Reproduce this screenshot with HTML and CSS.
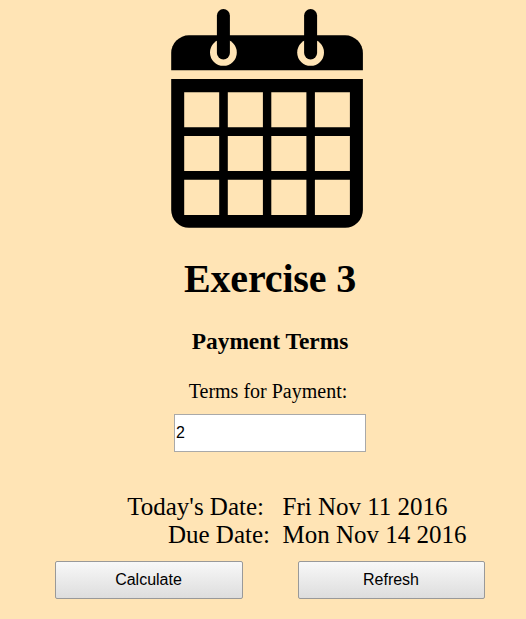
FILE: index.html
```html
<!DOCTYPE html>
<html lang="en">
<head>
<meta charset="utf-8">
<title>Exercise 3</title>
<link rel="stylesheet" href="styles.css">
</head>
<body>
<main class="page">
  <svg class="calendar" width="194" height="220" viewBox="170 9 194 220" aria-hidden="true">
    <path d="M171.2 70.2V53a17.7 17.7 0 0 1 17.7-17.7H345.2A17.7 17.7 0 0 1 362.9 53V70.2Z"/>
    <path fill-rule="evenodd" d="M171.2 79.1H362.9V210a17.7 17.7 0 0 1-17.7 17.8H188.9A17.7 17.7 0 0 1 171.2 210ZM184.2 92.2v35.1h35v-35.1zm43.6 0v35.1h35.1v-35.1zm43.5 0v35.1h35.1v-35.1zm43.6 0v35.1h35v-35.1zM184.2 136v35.1h35V136zm43.6 0v35.1h35.1V136zm43.5 0v35.1h35.1V136zm43.6 0v35.1h35V136zM184.2 179.8v35.1h35v-35.1zm43.6 0v35.1h35.1v-35.1zm43.5 0v35.1h35.1v-35.1zm43.6 0v35.1h35v-35.1z"/>
    <circle class="ring" cx="223.4" cy="52.4" r="13.4"/>
    <circle class="ring" cx="310.6" cy="52.4" r="13.4"/>
    <rect x="216.9" y="9" width="13" height="50.5" rx="6.5"/>
    <rect x="304.1" y="9" width="13" height="50.5" rx="6.5"/>
  </svg>
  <h1 class="title">Exercise 3</h1>
  <h3 class="subtitle">Payment Terms</h3>
  <label class="label" for="terms">Terms for Payment:</label>
  <input class="terms" id="terms" type="text" value="2">
  <div class="dates">
    <span class="name today">Today's Date:</span><span>Fri Nov 11 2016</span>
    <span class="name">Due Date:</span><span>Mon Nov 14 2016</span>
  </div>
  <div class="actions">
    <button class="button" type="button">Calculate</button>
    <button class="button refresh" type="button">Refresh</button>
  </div>
</main>
</body>
</html>
```
FILE: styles.css
```css
* {
  box-sizing: border-box;
}

html {
  overflow: hidden;
}

body {
  margin: 0;
  background: #ffe4b5;
  color: #000;
  font: 20px/24px "Liberation Serif", "Times New Roman", serif;
}

.page {
  display: flex;
  flex-direction: column;
  align-items: center;
  width: 540px;
  height: 619px;
  margin-right: -14px;
  padding-top: 9px;
}

.calendar {
  display: block;
  margin-right: 6px;
}

.ring {
  fill: #ffe4b5;
}

.title {
  margin: 27px 0 0;
  font-size: 40px;
  line-height: 46px;
  letter-spacing: -0.15px;
}

.subtitle {
  margin: 26px 0 0;
  font-size: 23.4px;
  line-height: 26px;
}

.label {
  margin-top: 25px;
  margin-right: 4px;
}

.terms {
  width: 192px;
  height: 38px;
  margin-top: 11px;
  padding: 1px;
  border: 1px solid #a9a9a9;
  border-radius: 0;
  background: #fff;
  color: #000;
  font: 16px "Liberation Sans", Arial, sans-serif;
}

.dates {
  display: grid;
  grid-template-columns: 270px 257.5px;
  column-gap: 12.5px;
  margin-top: 41px;
  font-size: 25px;
  line-height: 28px;
}

.name {
  text-align: right;
}

.today {
  padding-right: 6px;
}

.actions {
  display: flex;
  gap: 55px;
  margin-top: 12px;
  margin-right: 1px;
}

.button {
  width: 188px;
  height: 38px;
  padding: 0;
  border: 1px solid #999;
  border-radius: 2px;
  background: linear-gradient(#f8f8f8, #ddd);
  color: #000;
  font: 16px "Liberation Sans", Arial, sans-serif;
}

.refresh {
  width: 187px;
}
```
